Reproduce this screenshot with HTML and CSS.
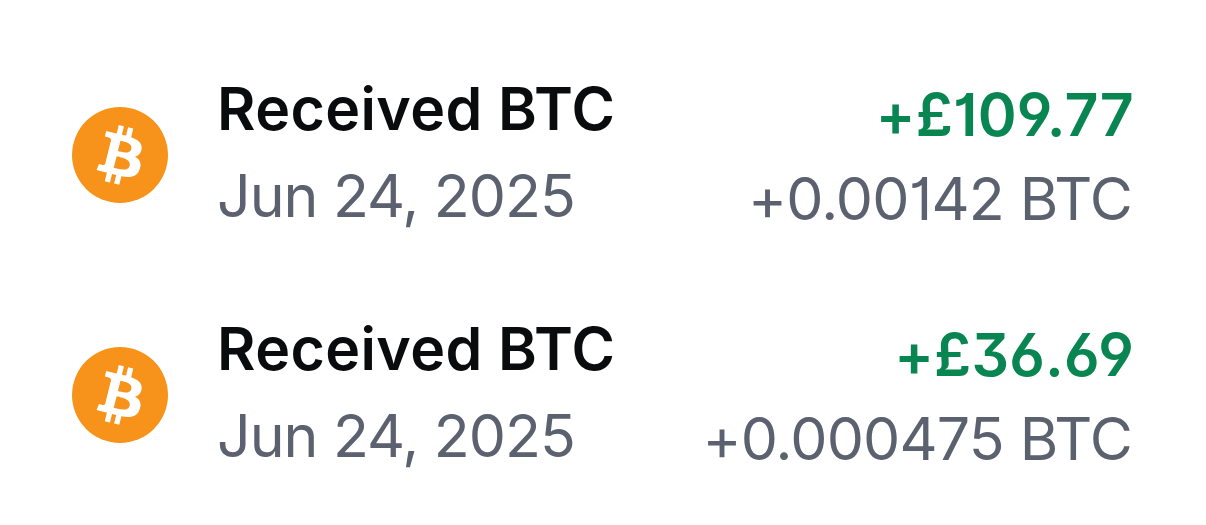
FILE: index.html
```html
<!DOCTYPE html>
<html lang="en">
<head>
  <meta charset="UTF-8">
  <meta name="viewport" content="width=device-width, initial-scale=1.0">
  <title>Transactions</title>
  <link rel="stylesheet" href="styles.css">
</head>
<body>
  <ul class="transactions">
    <li class="transaction">
      <svg class="coin" viewBox="0 0 32 32" aria-hidden="true">
        <circle cx="16" cy="16" r="16" fill="#f7931a"/>
        <path fill="#fff" d="M23.189 14.02c.314-2.096-1.283-3.223-3.465-3.975l.708-2.84-1.728-.43-.69 2.765c-.454-.114-.92-.22-1.385-.326l.695-2.783L15.596 6l-.708 2.839c-.376-.086-.746-.17-1.104-.26l.002-.009-2.384-.595-.46 1.846s1.283.294 1.256.312c.7.175.826.638.805 1.006l-.806 3.235c.048.012.11.03.18.057l-.183-.045-1.13 4.532c-.086.212-.303.531-.793.41.018.025-1.256-.313-1.256-.313l-.858 1.978 2.25.561c.418.105.828.215 1.231.318l-.715 2.872 1.727.43.708-2.84c.472.127.93.245 1.378.357l-.706 2.828 1.728.43.715-2.866c2.948.558 5.164.333 6.097-2.333.752-2.146-.037-3.385-1.588-4.192 1.13-.26 1.98-1.003 2.207-2.538zm-3.95 5.538c-.533 2.147-4.148.986-5.32.695l.95-3.805c1.172.293 4.929.872 4.37 3.11zm.535-5.569c-.487 1.953-3.495.96-4.47.717l.86-3.45c.975.243 4.118.696 3.61 2.733z"/>
      </svg>
      <div class="details">
        <span class="title">Received BTC</span>
        <span class="date">Jun 24, 2025</span>
      </div>
      <div class="amounts">
        <span class="fiat">+£109.77</span>
        <span class="crypto">+0.00142 BTC</span>
      </div>
    </li>
    <li class="transaction">
      <svg class="coin" viewBox="0 0 32 32" aria-hidden="true">
        <circle cx="16" cy="16" r="16" fill="#f7931a"/>
        <path fill="#fff" d="M23.189 14.02c.314-2.096-1.283-3.223-3.465-3.975l.708-2.84-1.728-.43-.69 2.765c-.454-.114-.92-.22-1.385-.326l.695-2.783L15.596 6l-.708 2.839c-.376-.086-.746-.17-1.104-.26l.002-.009-2.384-.595-.46 1.846s1.283.294 1.256.312c.7.175.826.638.805 1.006l-.806 3.235c.048.012.11.03.18.057l-.183-.045-1.13 4.532c-.086.212-.303.531-.793.41.018.025-1.256-.313-1.256-.313l-.858 1.978 2.25.561c.418.105.828.215 1.231.318l-.715 2.872 1.727.43.708-2.84c.472.127.93.245 1.378.357l-.706 2.828 1.728.43.715-2.866c2.948.558 5.164.333 6.097-2.333.752-2.146-.037-3.385-1.588-4.192 1.13-.26 1.98-1.003 2.207-2.538zm-3.95 5.538c-.533 2.147-4.148.986-5.32.695l.95-3.805c1.172.293 4.929.872 4.37 3.11zm.535-5.569c-.487 1.953-3.495.96-4.47.717l.86-3.45c.975.243 4.118.696 3.61 2.733z"/>
      </svg>
      <div class="details">
        <span class="title">Received BTC</span>
        <span class="date">Jun 24, 2025</span>
      </div>
      <div class="amounts">
        <span class="fiat">+£36.69</span>
        <span class="crypto">+0.000475 BTC</span>
      </div>
    </li>
  </ul>
</body>
</html>
```

FILE: styles.css
```css
body {
  margin: 0;
  background: #fff;
  font-family: Inter, "Liberation Sans", sans-serif;
  /* flat one and three, open six and nine */
  font-feature-settings: "cv01", "cv03", "cv04", "cv09";
}

.transactions {
  list-style: none;
  margin: 0;
  padding: 35px 72px 0;
}

.transaction {
  display: flex;
  align-items: center;
  height: 240px;
}

.coin {
  width: 96px;
  height: 96px;
  margin-right: 49px;
}

.details,
.amounts {
  display: flex;
  flex-direction: column;
  font-size: 59px;
  letter-spacing: -1px;
  white-space: nowrap;
}

.details {
  line-height: 87px;
  padding-bottom: 6px;
}

.amounts {
  margin-left: auto;
  align-items: flex-end;
  line-height: 84px;
  padding-top: 4px;
}

.title {
  color: #0a0b0d;
  font-weight: 600;
  letter-spacing: 0.4px;
}

.date,
.crypto {
  color: #5b616e;
}

.crypto {
  letter-spacing: -0.8px;
  padding-right: 2px;
}

.fiat {
  color: #098551;
  font-weight: 600;
  letter-spacing: 0.2px;
}
```
